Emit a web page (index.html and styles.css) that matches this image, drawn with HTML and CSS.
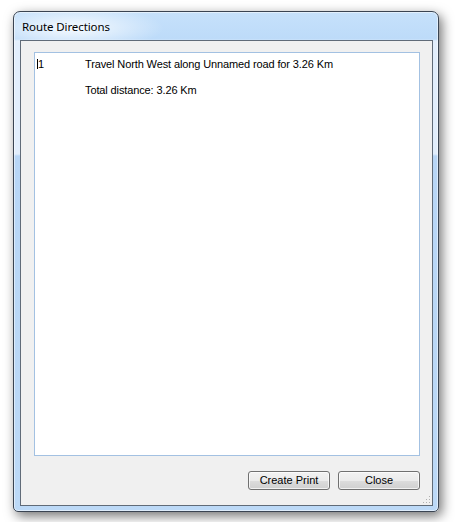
FILE: index.html
```html
<!DOCTYPE html>
<html>
<head>
<meta charset="utf-8">
<link rel="stylesheet" href="styles.css">
</head>
<body>
<div class="window">
  <div class="titlebar"><span class="title">Route Directions</span></div>
  <div class="client">
    <div class="textbox">
      <div class="line"><span class="num"><span class="caret"></span>1</span><span class="txt">Travel North West along Unnamed road for 3.26 Km</span></div>
      <div class="line"><span class="num"></span><span class="txt">Total distance: 3.26 Km</span></div>
    </div>
    <div class="buttons">
      <button class="btn">Create Print</button>
      <button class="btn">Close</button>
    </div>
    <div class="grip">
      <svg width="9" height="9" viewBox="0 0 9 9">
        <rect x="7" y="1" width="1" height="1" fill="#b0b0b0"/>
        <rect x="4" y="4" width="1" height="1" fill="#b0b0b0"/>
        <rect x="7" y="4" width="1" height="1" fill="#b0b0b0"/>
        <rect x="1" y="7" width="1" height="1" fill="#b0b0b0"/>
        <rect x="4" y="7" width="1" height="1" fill="#b0b0b0"/>
        <rect x="7" y="7" width="1" height="1" fill="#b0b0b0"/>
      </svg>
    </div>
  </div>
</div>
</body>
</html>
```
FILE: styles.css
```css
html, body {
  margin: 0;
  padding: 0;
  background: #ffffff;
  width: 455px;
  height: 522px;
  overflow: hidden;
}

.window {
  margin: 11px 0 0 13px;
  width: 426px;
  height: 501px;
  box-sizing: border-box;
  border: 1px solid #3a4452;
  border-radius: 7px 7px 5px 5px;
  display: flex;
  flex-direction: column;
  background:
    radial-gradient(ellipse 90px 22px at 60px 16px, rgba(255,255,255,0.85), rgba(255,255,255,0) 100%),
    linear-gradient(180deg, #c6e1fb 0, #bddbf9 27px, #e2eefc 29px, #e2eefc 142px, #b8d6f6 144px, #bcd9f7 100%);
  box-shadow: 3px 4px 12px rgba(0,0,0,0.55), 0 0 0 1px rgba(255,255,255,0.5) inset;
}

.titlebar {
  height: 28px;
  flex: none;
  display: flex;
  align-items: center;
  padding-left: 8px;
}

.title {
  font-family: "Noto Sans", "DejaVu Sans", sans-serif;
  font-size: 11.5px;
  color: #000;
  letter-spacing: -0.1px;
  margin-top: 1px;
}

.client {
  flex: 1;
  margin: 0 5px 5px 6px;
  border: 1px solid #606b78;
  background: #f0f0f0;
  display: flex;
  flex-direction: column;
  padding: 11px 12px 0 13px;
  position: relative;
}

.textbox {
  height: 404px;
  box-sizing: border-box;
  border: 1px solid #a3c1e2;
  background: #ffffff;
  padding: 5px 0 0 2px;
  font-family: "Liberation Sans", Arial, sans-serif;
  font-size: 11px;
  letter-spacing: -0.12px;
  color: #000;
}

.line {
  display: flex;
  height: 26px;
  line-height: 13px;
}

.num {
  width: 48px;
  flex: none;
  position: relative;
}

.caret {
  display: inline-block;
  width: 1px;
  height: 10px;
  background: #000;
  vertical-align: -1px;
  margin-right: 0;
}

.buttons {
  display: flex;
  justify-content: flex-end;
  gap: 8px;
  margin-top: 15px;
}

.btn {
  width: 82px;
  height: 19px;
  padding: 0;
  box-sizing: border-box;
  border: 1px solid #707070;
  border-radius: 3px;
  background: linear-gradient(180deg, #f2f2f2 0, #ebebeb 50%, #dddddd 51%, #cfcfcf 100%);
  box-shadow: inset 0 0 0 1px rgba(255,255,255,0.7);
  font-family: "Liberation Sans", Arial, sans-serif;
  font-size: 11px;
  color: #000;
  line-height: 15px;
}

.grip {
  position: absolute;
  right: 1px;
  bottom: 1px;
  width: 9px;
  height: 9px;
  line-height: 0;
}
```
